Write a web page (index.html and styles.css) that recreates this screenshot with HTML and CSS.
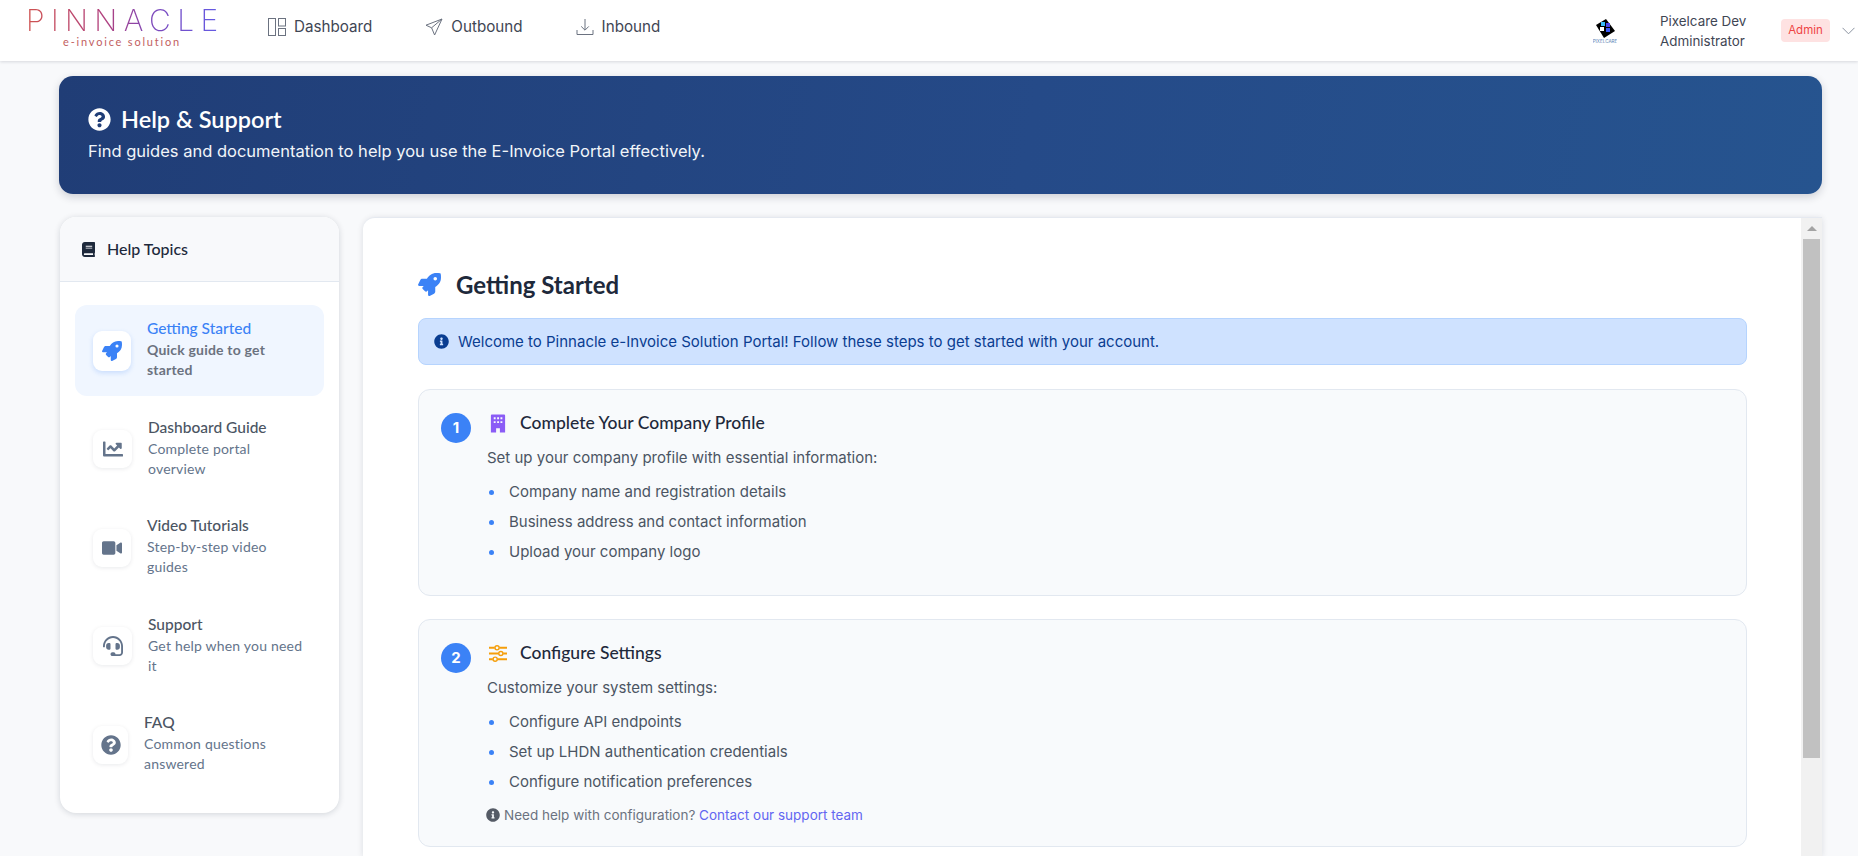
FILE: index.html
```html
<!DOCTYPE html>
<html lang="en">
<head>
<meta charset="utf-8">
<title>Help &amp; Support</title>
<link rel="stylesheet" href="styles.css">
</head>
<body>
<header class="topbar">
  <div class="logo">
    <div class="logo-name">PINNACLE</div>
    <div class="logo-tag">e-invoice solution</div>
  </div>
  <nav class="nav">
    <a class="nav-link nav-dash">
      <svg class="nav-icon" viewBox="0 0 18 18" fill="none" stroke="#6b7280" stroke-width="1"><rect x="0.5" y="0.5" width="7" height="17"/><rect x="10.5" y="0.5" width="7" height="7.5"/><rect x="10.5" y="10.5" width="7" height="7"/></svg>
      Dashboard
    </a>
    <a class="nav-link nav-out">
      <svg class="nav-icon" viewBox="0 0 18 18" fill="none" stroke="#6b7280" stroke-width="1" stroke-linejoin="round"><path d="M17 1 1 7.2l5.6 2.6L9.6 17 17 1Z"/><path d="M17 1 6.6 9.8"/></svg>
      Outbound
    </a>
    <a class="nav-link">
      <svg class="nav-icon" viewBox="0 0 18 18" fill="none" stroke="#6b7280" stroke-width="1"><path d="M9 1v11M5.2 8.4 9 12.2l3.8-3.8"/><path d="M1 12v4.5h16V12"/></svg>
      Inbound
    </a>
  </nav>
  <div class="user">
    <svg class="user-logo" viewBox="0 0 24 26">
      <path d="M3 7 13 1l9 12-11 7L3 7Z" fill="#000"/>
      <rect x="8" y="4" width="4" height="4" fill="#38bdf8"/>
      <rect x="13" y="5" width="4" height="4" fill="#4f46e5"/>
      <rect x="7" y="9" width="4" height="4" fill="#fff"/>
      <rect x="13" y="10" width="4" height="4" fill="#3b5bf6"/>
      <text x="12" y="25" text-anchor="middle" class="user-logo-text">PIXELCARE</text>
    </svg>
    <div class="user-name">
      <div>Pixelcare Dev</div>
      <div>Administrator</div>
    </div>
    <span class="badge">Admin</span>
    <svg class="chevron" viewBox="0 0 13 8" fill="none" stroke="#8b93a0" stroke-width="1"><path d="M.5.8 6.5 6.8 12.5.8"/></svg>
  </div>
</header>

<div class="page">
  <section class="banner">
    <h1 class="banner-title">
      <svg class="banner-icon" viewBox="0 0 512 512" fill="#fff"><path d="M504 256c0 136.997-111.043 248-248 248S8 392.997 8 256C8 119.083 119.043 8 256 8s248 111.083 248 248zM262.655 90c-54.497 0-89.255 22.957-116.549 63.758-3.536 5.286-2.353 12.415 2.715 16.258l34.699 26.31c5.205 3.947 12.621 3.008 16.665-2.122 17.864-22.658 30.113-35.797 57.303-35.797 20.429 0 45.698 13.148 45.698 32.958 0 14.976-12.363 22.667-32.534 33.976C247.128 238.528 216 254.941 216 296v4c0 6.627 5.373 12 12 12h56c6.627 0 12-5.373 12-12v-1.333c0-28.462 83.186-29.647 83.186-106.667 0-58.002-60.165-102-116.531-102zM256 338c-25.365 0-46 20.635-46 46 0 25.364 20.635 46 46 46s46-20.636 46-46c0-25.365-20.635-46-46-46z"/></svg>
      Help &amp; Support
    </h1>
    <p class="banner-sub">Find guides and documentation to help you use the E-Invoice Portal effectively.</p>
  </section>

  <div class="columns">
    <aside class="sidebar">
      <div class="side-head">
        <svg class="side-head-icon" viewBox="0 0 448 512" fill="#1e293b"><path d="M448 360V24c0-13.3-10.7-24-24-24H96C43 0 0 43 0 96v320c0 53 43 96 96 96h328c13.3 0 24-10.7 24-24v-16c0-7.5-3.5-14.3-8.9-18.7-4.2-15.4-4.2-59.3 0-74.7 5.4-4.3 8.9-11.1 8.9-18.6zM128 134c0-3.3 2.7-6 6-6h212c3.3 0 6 2.7 6 6v20c0 3.3-2.7 6-6 6H134c-3.3 0-6-2.7-6-6v-20zm0 64c0-3.3 2.7-6 6-6h212c3.3 0 6 2.7 6 6v20c0 3.3-2.7 6-6 6H134c-3.3 0-6-2.7-6-6v-20zm253.4 250H96c-17.7 0-32-14.3-32-32 0-17.6 14.4-32 32-32h285.4c-1.9 17.1-1.9 46.9 0 64z"/></svg>
        Help Topics
      </div>
      <ul class="topics">
        <li class="topic topic-active">
          <span class="topic-icon w38"><svg class="ti ti-active" viewBox="0 0 512 512"><path d="M505.12 19.09c-1.19-5.53-6.66-11-12.21-12.18C460.72 0 435.51 0 410.41 0 307.18 0 245.27 55.2 199.05 128H94.84c-16.35.02-35.56 11.88-42.89 26.48L2.52 253.3A28.4 28.4 0 0 0 0 264a24 24 0 0 0 24 24h103.81l-22.47 22.47c-11.37 11.36-13 32.26 0 45.25l50.9 50.9c11.16 11.19 32.16 13.16 45.28 0l22.47-22.47V488a24 24 0 0 0 24 24 28.56 28.56 0 0 0 10.71-2.52l98.73-49.39c14.63-7.3 26.51-26.5 26.51-42.86V312.8c72.6-46.31 128.03-108.41 128.03-211.1.05-25.2.05-50.4-6.9-82.6zM384.04 168a40 40 0 1 1 40.01-40 40.02 40.02 0 0 1-40.01 40z"/></svg></span>
          <div class="topic-text">
            <div class="topic-title">Getting Started</div>
            <div class="topic-desc">Quick guide to get started</div>
          </div>
        </li>
        <li class="topic">
          <span class="topic-icon w39"><svg class="ti" viewBox="0 0 512 512"><path d="M496 384H64V80c0-8.84-7.16-16-16-16H16C7.16 64 0 71.16 0 80v336c0 17.67 14.33 32 32 32h464c8.84 0 16-7.16 16-16v-32c0-8.84-7.16-16-16-16zM464 96H345.94c-21.38 0-32.09 25.85-16.97 40.97l32.4 32.4L288 242.75l-73.37-73.37c-12.5-12.5-32.76-12.5-45.25 0l-68.69 68.69c-6.25 6.25-6.25 16.38 0 22.63l22.62 22.62c6.25 6.25 16.38 6.25 22.63 0L192 237.25l73.37 73.37c12.5 12.5 32.76 12.5 45.25 0l96-96 32.4 32.4c15.12 15.12 40.97 4.41 40.97-16.97V112c0-8.84-7.16-16-16-16z"/></svg></span>
          <div class="topic-text">
            <div class="topic-title">Dashboard Guide</div>
            <div class="topic-desc">Complete portal overview</div>
          </div>
        </li>
        <li class="topic">
          <span class="topic-icon w38"><svg class="ti" viewBox="0 0 576 512"><path d="M336.2 64H47.8C21.4 64 0 85.4 0 111.8v288.4C0 426.6 21.4 448 47.8 448h288.4c26.4 0 47.8-21.4 47.8-47.8V111.8c0-26.4-21.4-47.8-47.8-47.8zm189.4 37.7L416 177.3v157.4l109.6 75.5c21.2 14.6 50.4-.3 50.4-25.8V127.5c0-25.4-29.1-40.4-50.4-25.8z"/></svg></span>
          <div class="topic-text">
            <div class="topic-title">Video Tutorials</div>
            <div class="topic-desc">Step-by-step video guides</div>
          </div>
        </li>
        <li class="topic">
          <span class="topic-icon w39"><svg class="ti" viewBox="0 0 512 512"><path d="M192 208c0-17.67-14.33-32-32-32h-16c-35.35 0-64 28.65-64 64v48c0 35.35 28.65 64 64 64h16c17.67 0 32-14.33 32-32V208zm176 144c35.35 0 64-28.65 64-64v-48c0-35.35-28.65-64-64-64h-16c-17.67 0-32 14.33-32 32v112c0 17.67 14.33 32 32 32h16zM256 0C113.18 0 4.58 118.83 0 256v16c0 8.84 7.16 16 16 16h16c8.84 0 16-7.16 16-16v-16c0-114.69 93.31-208 208-208s208 93.31 208 208h-.12c.08 2.43.12 165.72.12 165.72 0 23.35-18.93 42.28-42.28 42.28H320c0-26.51-21.49-48-48-48h-32c-26.51 0-48 21.49-48 48s21.49 48 48 48h181.72c49.86 0 90.28-40.42 90.28-90.28V256C507.42 118.83 398.82 0 256 0z"/></svg></span>
          <div class="topic-text">
            <div class="topic-title">Support</div>
            <div class="topic-desc">Get help when you need it</div>
          </div>
        </li>
        <li class="topic">
          <span class="topic-icon w35"><svg class="ti" viewBox="0 0 512 512"><path d="M504 256c0 136.997-111.043 248-248 248S8 392.997 8 256C8 119.083 119.043 8 256 8s248 111.083 248 248zM262.655 90c-54.497 0-89.255 22.957-116.549 63.758-3.536 5.286-2.353 12.415 2.715 16.258l34.699 26.31c5.205 3.947 12.621 3.008 16.665-2.122 17.864-22.658 30.113-35.797 57.303-35.797 20.429 0 45.698 13.148 45.698 32.958 0 14.976-12.363 22.667-32.534 33.976C247.128 238.528 216 254.941 216 296v4c0 6.627 5.373 12 12 12h56c6.627 0 12-5.373 12-12v-1.333c0-28.462 83.186-29.647 83.186-106.667 0-58.002-60.165-102-116.531-102zM256 338c-25.365 0-46 20.635-46 46 0 25.364 20.635 46 46 46s46-20.636 46-46c0-25.365-20.635-46-46-46z"/></svg></span>
          <div class="topic-text">
            <div class="topic-title">FAQ</div>
            <div class="topic-desc">Common questions answered</div>
          </div>
        </li>
      </ul>
    </aside>

    <main class="panel">
      <div class="panel-body">
        <h2 class="panel-title">
          <svg class="panel-rocket" viewBox="0 0 512 512" fill="#3b82f6"><path d="M505.12 19.09c-1.19-5.53-6.66-11-12.21-12.18C460.72 0 435.51 0 410.41 0 307.18 0 245.27 55.2 199.05 128H94.84c-16.35.02-35.56 11.88-42.89 26.48L2.52 253.3A28.4 28.4 0 0 0 0 264a24 24 0 0 0 24 24h103.81l-22.47 22.47c-11.37 11.36-13 32.26 0 45.25l50.9 50.9c11.16 11.19 32.16 13.16 45.28 0l22.47-22.47V488a24 24 0 0 0 24 24 28.56 28.56 0 0 0 10.71-2.52l98.73-49.39c14.63-7.3 26.51-26.5 26.51-42.86V312.8c72.6-46.31 128.03-108.41 128.03-211.1.05-25.2.05-50.4-6.9-82.6zM384.04 168a40 40 0 1 1 40.01-40 40.02 40.02 0 0 1-40.01 40z"/></svg>
          Getting Started
        </h2>
        <div class="alert">
          <svg class="alert-icon" viewBox="0 0 512 512" fill="#0a3d91"><path d="M256 8C119.043 8 8 119.083 8 256c0 136.997 111.043 248 248 248s248-111.003 248-248C504 119.083 392.957 8 256 8zm0 110c23.196 0 42 18.804 42 42s-18.804 42-42 42-42-18.804-42-42 18.804-42 42-42zm56 254c0 6.627-5.373 12-12 12h-88c-6.627 0-12-5.373-12-12v-24c0-6.627 5.373-12 12-12h12v-64h-12c-6.627 0-12-5.373-12-12v-24c0-6.627 5.373-12 12-12h64c6.627 0 12 5.373 12 12v100h12c6.627 0 12 5.373 12 12v24z"/></svg>
          Welcome to Pinnacle e-Invoice Solution Portal! Follow these steps to get started with your account.
        </div>

        <article class="step step-first">
          <span class="step-num">1</span>
          <div class="step-body">
            <h3 class="step-title">
              <svg class="step-icon" viewBox="0 0 19 19"><path fill="#8b5cf6" fill-rule="evenodd" d="M3 0h13a1 1 0 0 1 1 1v18h-5.5v-4.5h-4V19H2V1a1 1 0 0 1 1-1Zm2 3v2h2V3H5Zm3.6 0v2h2V3h-2Zm3.5 0v2h2V3h-2ZM5 7v2h2V7H5Zm3.6 0v2h2V7h-2Zm3.5 0v2h2V7h-2Z"/></svg>
              Complete Your Company Profile
            </h3>
            <p class="step-text">Set up your company profile with essential information:</p>
            <ul class="step-list">
              <li>Company name and registration details</li>
              <li>Business address and contact information</li>
              <li>Upload your company logo</li>
            </ul>
          </div>
        </article>

        <article class="step step-second">
          <span class="step-num">2</span>
          <div class="step-body">
            <h3 class="step-title">
              <svg class="step-icon" viewBox="0 0 19 19" fill="none" stroke="#f59e0b" stroke-width="2"><path d="M0 3.5h6M11 3.5h8M0 9.5h10M15 9.5h4M0 15.5h4M9 15.5h10"/><circle cx="8.5" cy="3.5" r="2.2" stroke-width="1.5"/><circle cx="12.5" cy="9.5" r="2.2" stroke-width="1.5"/><circle cx="6.5" cy="15.5" r="2.2" stroke-width="1.5"/></svg>
              Configure Settings
            </h3>
            <p class="step-text">Customize your system settings:</p>
            <ul class="step-list">
              <li>Configure API endpoints</li>
              <li>Set up LHDN authentication credentials</li>
              <li>Configure notification preferences</li>
            </ul>
            <p class="step-note">
              <svg class="note-icon" viewBox="0 0 512 512" fill="#555b66"><path d="M256 8C119.043 8 8 119.083 8 256c0 136.997 111.043 248 248 248s248-111.003 248-248C504 119.083 392.957 8 256 8zm0 110c23.196 0 42 18.804 42 42s-18.804 42-42 42-42-18.804-42-42 18.804-42 42-42zm56 254c0 6.627-5.373 12-12 12h-88c-6.627 0-12-5.373-12-12v-24c0-6.627 5.373-12 12-12h12v-64h-12c-6.627 0-12-5.373-12-12v-24c0-6.627 5.373-12 12-12h64c6.627 0 12 5.373 12 12v100h12c6.627 0 12 5.373 12 12v24z"/></svg>
              <span>Need help with configuration? <a class="note-link">Contact our support team</a></span>
            </p>
          </div>
        </article>
      </div>
      <div class="scrollbar">
        <span class="scroll-up"></span>
        <span class="scroll-thumb"></span>
      </div>
    </main>
  </div>
</div>
</body>
</html>
```

FILE: styles.css
```css
* { box-sizing: border-box; }
html, body { height: 100%; }
body {
  margin: 0;
  height: 100vh;
  overflow: hidden;
  display: flex;
  flex-direction: column;
  background: #f8f9fb;
  font-family: Inter, "Liberation Sans", sans-serif;
  color: #374151;
}
h1, h2, h3, p, ul { margin: 0; padding: 0; }
ul { list-style: none; }

/* top bar */
.topbar {
  flex: 0 0 61px;
  display: flex;
  align-items: center;
  background: #fff;
  box-shadow: 0 1px 3px rgba(15, 23, 42, .14);
  padding-left: 26px;
  position: relative;
  z-index: 2;
}
.logo { width: 192px; margin-right: 50px; margin-top: -6px; }
.logo-name {
  display: inline-block;
  font: 200 30px/26px Inter, sans-serif;
  letter-spacing: 6.4px;
  white-space: nowrap;
  background: linear-gradient(90deg, #cf5350 0%, #b0407f 40%, #7d46b8 62%, #625de8 100%);
  -webkit-background-clip: text;
  background-clip: text;
  color: transparent;
}
.logo-tag {
  text-align: center;
  font: 400 11px/14px Lato, sans-serif;
  letter-spacing: 1.8px;
  color: #c2605f;
}
.nav { display: flex; align-items: center; margin-bottom: 8px; }
.nav-link {
  display: flex;
  align-items: center;
  gap: 8px;
  font-size: 15.2px;
  color: #3f4654;
}
.nav-dash { margin-right: 53px; }
.nav-out { margin-right: 53px; }
.nav-icon { width: 18px; height: 18px; }

.user { margin-left: auto; display: flex; align-items: center; }
.user-logo { width: 24px; height: 26px; margin-right: 43px; }
.user-logo-text { font: 400 4.6px Inter, sans-serif; fill: #5b7fb5; }
.user-name { width: 121px; font-size: 13.4px; line-height: 20px; color: #3f4654; }
.badge {
  width: 49px;
  height: 23px;
  background: #fee2e2;
  color: #ef4444;
  border-radius: 4px;
  font-size: 11.5px;
  line-height: 23px;
  text-align: center;
}
.chevron { width: 13px; height: 8px; margin: 0 3px 0 12px; }

/* page */
.page {
  flex: 1;
  min-height: 0;
  display: flex;
  flex-direction: column;
  gap: 23px;
  padding: 15px 36px 0 59px;
}
.banner {
  flex: 0 0 118px;
  border-radius: 14px;
  padding: 27px 29px;
  background: linear-gradient(100deg, #203d76 0%, #254a88 55%, #26548f 100%);
  box-shadow: 0 3px 8px rgba(15, 23, 42, .18);
  color: #fff;
}
.banner-title {
  display: flex;
  align-items: center;
  gap: 10px;
  font: 600 23.5px/32px Lato, sans-serif;
}
.banner-icon { width: 23px; height: 23px; }
.banner-sub { margin-top: 5px; font-size: 16.5px; line-height: 22px; color: #f1f5f9; }

.columns { flex: 1; min-height: 0; display: flex; gap: 24px; padding-left: 1px; }

/* sidebar */
.sidebar {
  flex: 0 0 279px;
  height: 596px;
  background: #fff;
  border-radius: 16px;
  box-shadow: 0 1px 6px rgba(15, 23, 42, .16);
  overflow: hidden;
}
.side-head {
  height: 65px;
  display: flex;
  align-items: center;
  gap: 12px;
  padding-left: 22px;
  background: #f8f9fb;
  border-bottom: 1px solid #e2e8f0;
  font: 500 16px/20px Lato, sans-serif;
  color: #1e293b;
}
.side-head-icon { width: 13px; height: 15px; }
.topics { padding: 23px 15px 0; }
.topic {
  display: flex;
  align-items: center;
  gap: 16px;
  height: 91px;
  margin-bottom: 7.5px;
  padding: 0 18px;
  border-radius: 12px;
}
.topic-active { background: #f0f6ff; }
.topic-icon {
  flex: none;
  height: 38px;
  display: flex;
  align-items: center;
  justify-content: center;
  background: #fff;
  border-radius: 9px;
  box-shadow: 0 1px 4px rgba(15, 23, 42, .09);
}
.w35 { width: 35px; }
.w38 { width: 38px; }
.w39 { width: 39px; }
.topic-active .topic-icon { height: 40px; box-shadow: 0 2px 5px rgba(59, 130, 246, .22); }
.ti { width: 20px; height: 20px; fill: #64748b; }
.ti-active { fill: #3b82f6; }
.topic-text { flex: none; width: 159px; padding-bottom: 3px; }
.topic-title { margin-bottom: 1px; font: 500 15.5px/21px Lato, sans-serif; color: #4b5563; }
.topic-desc { font: 400 14px/20px Lato, sans-serif; letter-spacing: .2px; color: #64748b; }
.topic-active .topic-title { color: #3b82f6; }
.topic-active .topic-desc { font-weight: 700; color: #6b7280; }

/* main panel */
.panel {
  flex: 1;
  min-width: 0;
  display: flex;
  background: #fff;
  border-top: 1px solid #e5e9f0;
  box-shadow: 0 1px 6px rgba(15, 23, 42, .12);
  border-radius: 12px 0 0 0;
  overflow: hidden;
}
.panel-body { flex: 1; min-width: 0; padding: 0 54px 0 55px; }
.scrollbar {
  flex: 0 0 21px;
  display: flex;
  flex-direction: column;
  align-items: center;
  background: #f1f1f1;
}
.scroll-up {
  flex: 0 0 5px;
  width: 0;
  height: 0;
  margin: 8px 0;
  border-left: 5px solid transparent;
  border-right: 5px solid transparent;
  border-bottom: 5px solid #a3a3a3;
}
.scroll-thumb { width: 17px; height: 519px; background: #c1c1c1; }

.panel-title {
  display: flex;
  align-items: center;
  gap: 15px;
  height: 100px;
  padding-top: 33px;
  font: 700 24px/30px Lato, sans-serif;
  color: #1e293b;
}
.panel-rocket { width: 23px; height: 23px; }
.alert {
  height: 47px;
  display: flex;
  align-items: center;
  gap: 9px;
  padding-left: 15px;
  background: #cfe2ff;
  border: 1px solid #b6d4fe;
  border-radius: 8px;
  font-size: 15px;
  color: #0a3d91;
}
.alert-icon { width: 15px; height: 15px; }

.step {
  display: flex;
  background: #f8fafc;
  border: 1px solid #e2e8f0;
  border-radius: 12px;
  padding: 23px 22px;
}
.step-first { height: 207px; margin-top: 24px; }
.step-second { height: 228px; margin-top: 23px; }
.step-num {
  flex: none;
  width: 30px;
  height: 30px;
  margin-right: 16px;
  border-radius: 50%;
  background: #3b82f6;
  color: #fff;
  font-size: 15px;
  font-weight: 700;
  line-height: 30px;
  text-align: center;
}
.step-body { flex: 1; min-width: 0; }
.step-title {
  display: flex;
  align-items: center;
  gap: 13px;
  height: 20px;
  font: 500 17.5px/20px Lato, sans-serif;
  color: #1e293b;
}
.step-icon { width: 18px; height: 19px; margin-left: 2px; flex: none; }
.step-text { margin-top: 13.5px; font-size: 15px; line-height: 22px; color: #4b5563; }
.step-list { margin-top: 8px; }
.step-list li {
  position: relative;
  height: 30px;
  padding-left: 22px;
  font-size: 15px;
  line-height: 30px;
  color: #4b5563;
}
.step-list li::before {
  content: "";
  position: absolute;
  left: 2px;
  top: 13px;
  width: 5px;
  height: 5px;
  border-radius: 50%;
  background: #3b82f6;
}
.step-note {
  display: flex;
  align-items: center;
  gap: 4px;
  margin-top: 8px;
  font-size: 13.5px;
  line-height: 20px;
  color: #6b7280;
}
.note-icon { width: 14px; height: 14px; margin-left: -1px; flex: none; }
.note-link { color: #6366f1; }
```
